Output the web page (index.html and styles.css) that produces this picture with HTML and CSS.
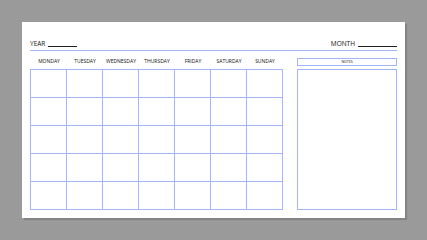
FILE: index.html
```html
<!DOCTYPE html>
<html>
<head>
<meta charset="utf-8">
<link rel="stylesheet" href="styles.css">
</head>
<body>
<div class="page">
  <div class="card">
    <div class="header">
      <div class="field"><span>YEAR</span><span class="blank year-blank"></span></div>
      <div class="field"><span>MONTH</span><span class="blank month-blank"></span></div>
    </div>
    <div class="body">
      <div class="calendar">
        <div class="days">
          <div>MONDAY</div><div>TUESDAY</div><div>WEDNESDAY</div><div>THURSDAY</div><div>FRIDAY</div><div>SATURDAY</div><div>SUNDAY</div>
        </div>
        <div class="grid">
          <div></div><div></div><div></div><div></div><div></div><div></div><div></div>
          <div></div><div></div><div></div><div></div><div></div><div></div><div></div>
          <div></div><div></div><div></div><div></div><div></div><div></div><div></div>
          <div></div><div></div><div></div><div></div><div></div><div></div><div></div>
          <div></div><div></div><div></div><div></div><div></div><div></div><div></div>
        </div>
      </div>
      <div class="notes">
        <div class="notes-title">NOTES</div>
        <div class="notes-box"></div>
      </div>
    </div>
  </div>
</div>
</body>
</html>
```
FILE: styles.css
```css
html, body {
  margin: 0;
  padding: 0;
  background: #9a9a9a;
  width: 427px;
  height: 240px;
  overflow: hidden;
}
.page {
  padding: 22px;
}
.card {
  box-sizing: border-box;
  width: 383px;
  height: 196px;
  background: #fff;
  box-shadow: 2px 2px 1px rgba(0, 0, 0, 0.14);
  padding: 0 8px 0 8px;
  font-family: "Open Sans", "DejaVu Sans", sans-serif;
  color: #111;
}
.header {
  box-sizing: border-box;
  height: 29px;
  border-bottom: 1px solid #a3b5f7;
  display: flex;
  justify-content: space-between;
  align-items: flex-end;
  padding-bottom: 3px;
}
.field {
  display: flex;
  align-items: flex-end;
  font-size: 6.5px;
  line-height: 6.5px;
}
.blank {
  display: inline-block;
  border-bottom: 1px solid #222;
  height: 0;
  margin-left: 3px;
  margin-bottom: 0.5px;
}
.year-blank { width: 29px; }
.month-blank { width: 39px; margin-left: 3px; }
.body {
  display: flex;
  gap: 14px;
}
.calendar {
  width: 253px;
}
.days {
  height: 18px;
  display: grid;
  grid-template-columns: repeat(7, 36px);
  align-items: center;
  padding-top: 2px;
  padding-left: 1px;
  box-sizing: border-box;
  font-size: 5px;
  line-height: 5px;
  text-align: center;
}
.grid {
  display: grid;
  grid-template-columns: repeat(7, 36px);
  grid-template-rows: repeat(5, 28px);
  border-left: 1px solid #a3b5f7;
  border-top: 1px solid #a3b5f7;
  width: 253px;
  box-sizing: border-box;
}
.grid > div {
  border-right: 1px solid #a3b5f7;
  border-bottom: 1px solid #a3b5f7;
}
.notes {
  width: 100px;
  padding-top: 7px;
  display: flex;
  flex-direction: column;
  gap: 3px;
}
.notes-title {
  box-sizing: border-box;
  height: 8px;
  border: 1px solid #a3b5f7;
  font-size: 3.5px;
  line-height: 6px;
  text-align: center;
}
.notes-box {
  box-sizing: border-box;
  height: 141px;
  border: 1px solid #a3b5f7;
}
```
